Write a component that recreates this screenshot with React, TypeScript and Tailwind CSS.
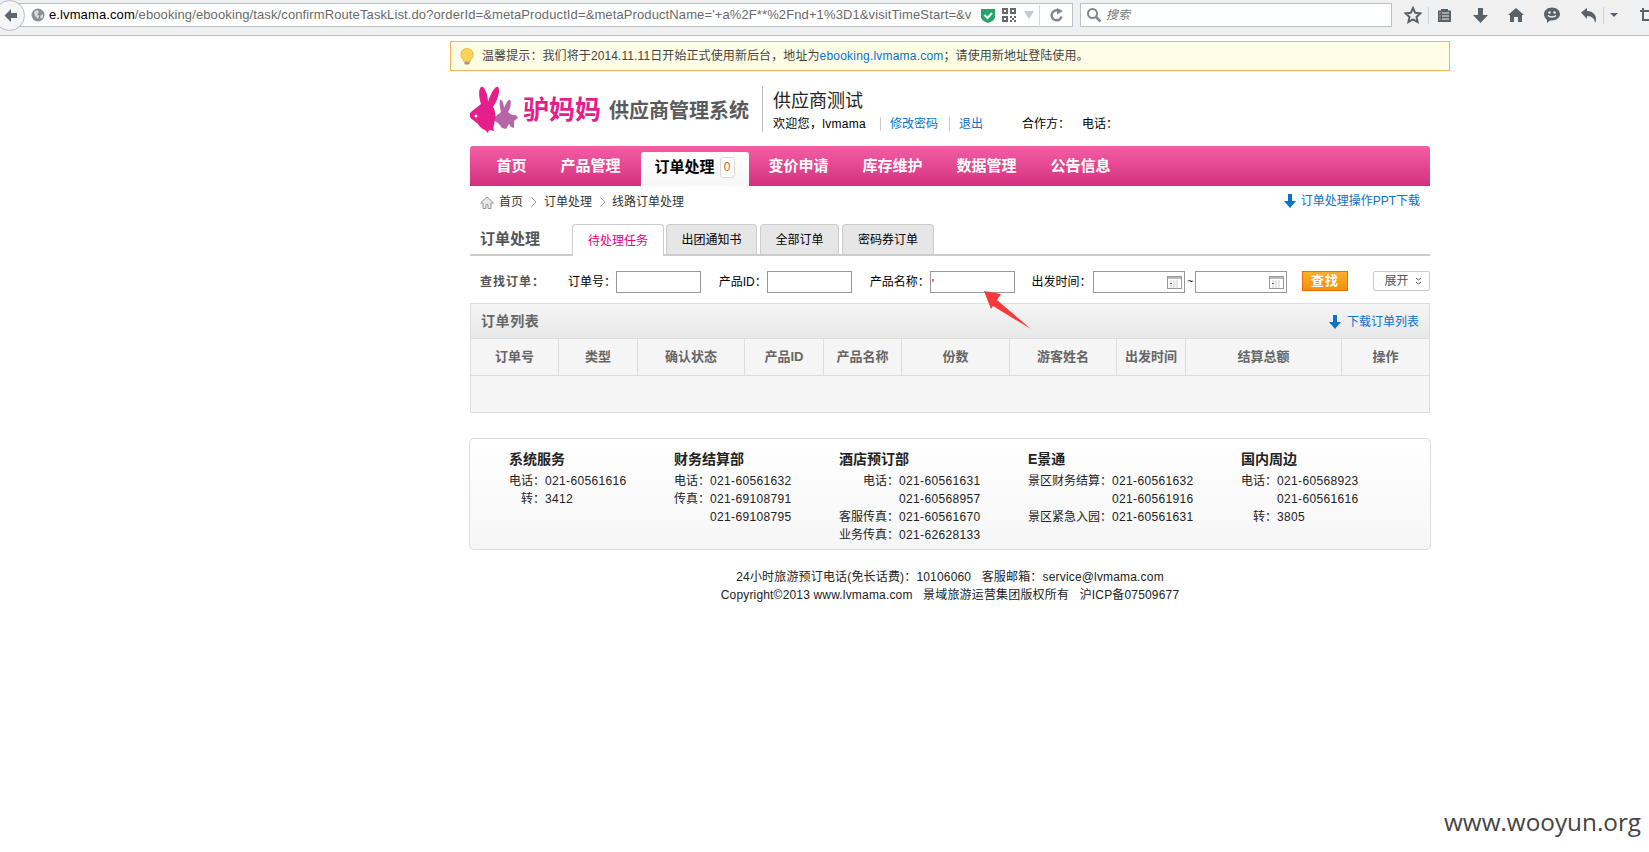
import React from 'react';

const font = "font-['Liberation_Sans','Noto_Sans_CJK_SC',sans-serif]";

const columns = [
  { name: '订单号', w: 'w-[88px]' },
  { name: '类型', w: 'w-[79px]' },
  { name: '确认状态', w: 'w-[107px]' },
  { name: '产品ID', w: 'w-[79px]' },
  { name: '产品名称', w: 'w-[78px]' },
  { name: '份数', w: 'w-[108px]' },
  { name: '游客姓名', w: 'w-[107px]' },
  { name: '出发时间', w: 'w-[69px]' },
  { name: '结算总额', w: 'w-[156px]' },
  { name: '操作', w: 'flex-1' },
];

const contacts = [
  {
    title: '系统服务',
    width: 'w-[165px]',
    label: 'w-[36px]',
    rows: [
      ['电话：', '021-60561616'],
      ['转：', '3412'],
    ],
  },
  {
    title: '财务结算部',
    width: 'w-[165px]',
    label: 'w-[36px]',
    rows: [
      ['电话：', '021-60561632'],
      ['传真：', '021-69108791'],
      ['', '021-69108795'],
    ],
  },
  {
    title: '酒店预订部',
    width: 'w-[189px]',
    label: 'w-[60px]',
    rows: [
      ['电话：', '021-60561631'],
      ['', '021-60568957'],
      ['客服传真：', '021-60561670'],
      ['业务传真：', '021-62628133'],
    ],
  },
  {
    title: 'E景通',
    width: 'w-[213px]',
    label: 'w-[84px]',
    rows: [
      ['景区财务结算：', '021-60561632'],
      ['', '021-60561916'],
      ['景区紧急入园：', '021-60561631'],
    ],
  },
  {
    title: '国内周边',
    width: 'w-[170px]',
    label: 'w-[36px]',
    rows: [
      ['电话：', '021-60568923'],
      ['', '021-60561616'],
      ['转：', '3805'],
    ],
  },
];

const DownArrow = () => (
  <svg width="12" height="14" viewBox="0 0 12 14" className="shrink-0">
    <path d="M4 0h4v7h4L6 14 0 7h4z" fill="#0a72c9" />
  </svg>
);

const Chevron = () => (
  <svg width="6" height="10" viewBox="0 0 6 10" className="shrink-0">
    <path d="M0.500 0.500L5 5 .5 9.500" fill="none" stroke="#999" />
  </svg>
);

const CalendarIcon = () => (
  <svg width="15" height="13" viewBox="0 0 15 13" className="shrink-0">
    <rect x="0.5" y="0.5" width="14" height="12" fill="#fff" stroke="#999" />
    <rect x="1" y="1" width="13" height="2" fill="#bbb" />
    <path d="M3 5h9M3 7h9M3 9h9M3 11h9" stroke="#ccc" strokeDasharray="2 1" />
    <rect x="3" y="7" width="2" height="1" fill="#d33" />
  </svg>
);

const Logo = () => (
  <svg width="52" height="48" viewBox="5 6 52 48" className="shrink-0">
    <path
      d="M37 19C39 18 41 23 41 27C43 23 45 18 47 19C49 21 47 28 45 31C47 33 50 35 53 34L55 37L51 40L51 47L48 46L46 43L43 48L39 47L36 43L32 40C30 38 31 36 33 35C35 33 37 32 38 31C37 27 36 22 37 19Z"
      fill="#b765a7"
      transform="translate(-2 1)"
    />
    <path
      d="M16 7C19 5 23 14 23 22C25 15 30 5 33 7C36 10 32 22 28 27C30 30 31 35 30 40C29 44 28 48 29 51L24 50L23 53L20 50C17 49 14 46 13 44L8 40C5 38 3 35 6 32C9 29 13 27 16 24C14 18 13 10 16 7Z"
      fill="#e61e8c"
    />
    <circle cx="11" cy="36" r="1.5" fill="#fff" />
  </svg>
);

const Toolbar = () => (
  <div className="flex items-center h-[35px] border-b border-[#bdbdbd] bg-[#f0f0f0] box-content">
    <div className="relative z-10 -ml-[6px] -mt-[4px] w-[31px] h-[31px] shrink-0 rounded-full border border-[#b5bcc4] bg-[#f5f5f5] flex items-center justify-end pr-[6px]">
      <svg width="15" height="15" viewBox="0 0 15 15">
        <path d="M8 1L1.5 7.5 8 14v-4h6V5H8z" fill="#5c6670" />
      </svg>
    </div>
    <div className="-ml-[10px] w-[1058px] h-[24px] shrink-0 -mt-[5px] border border-[#b8c0c8] bg-white flex items-center overflow-hidden">
      <svg width="14" height="14" viewBox="0 0 14 14" className="ml-[15px] shrink-0">
        <circle cx="7" cy="7" r="6.5" fill="#8a8f94" />
        <path d="M3 4l3-2 2 2-2 2 2 2-1 3-3-3zM9 8l3-2 0 3-2 2z" fill="#d9dcdf" />
      </svg>
      <div className="ml-[4px] w-[925px] shrink-0 overflow-hidden whitespace-nowrap text-[13px] tracking-[0.11px] text-[#6a6a6a]">
        <span className="text-black">e.lvmama.com</span>
        /ebooking/ebooking/task/confirmRouteTaskList.do?orderId=&metaProductId=&metaProductName='+a%2F**%2Fnd+1%3D1&visitTimeStart=&v
      </div>
      <svg width="14" height="15" viewBox="0 0 14 15" className="ml-[7px] shrink-0">
        <path d="M0 1h14v8c0 3-4 5-7 6-3-1-7-3-7-6z" fill="#2aa36b" />
        <path d="M3.5 7l3 3 4.500-5" fill="none" stroke="#fff" strokeWidth="2" />
      </svg>
      <svg width="14" height="14" viewBox="0 0 14 14" className="ml-[7px] shrink-0">
        <path d="M0 0h6v6H0zM8 0h6v6H8zM0 8h6v6H0zM8 8h2v2H8zM12 8h2v2h-2zM10 10h2v2h-2zM8 12h2v2H8zM12 12h2v2h-2z" fill="#666" />
        <path d="M2 2h2v2H2zM10 2h2v2h-2zM2 10h2v2H2z" fill="#fff" />
      </svg>
      <svg width="10" height="8" viewBox="0 0 10 8" className="ml-[8px] shrink-0">
        <path d="M0 0h10L5 8z" fill="#c3c9d0" />
      </svg>
      <div className="ml-[5px] w-px h-[20px] bg-[#d5d8db] shrink-0" />
      <svg width="14" height="14" viewBox="0 0 14 14" className="ml-[10px] shrink-0">
        <path d="M11.500 8.500A5 5 0 1 1 8 2.500" fill="none" stroke="#7d8791" strokeWidth="2.400" />
        <path d="M7 0l6 3-6 3.500z" fill="#7d8791" />
      </svg>
    </div>
    <div className="ml-[7px] w-[312px] h-[24px] shrink-0 -mt-[5px] border border-[#b8c0c8] bg-white flex items-center">
      <svg width="16" height="16" viewBox="0 0 16 16" className="ml-[5px]">
        <circle cx="6.500" cy="6.500" r="4.500" fill="none" stroke="#7f878f" strokeWidth="2" />
        <path d="M10 10l4.500 4.500" stroke="#7f878f" strokeWidth="2.500" />
      </svg>
      <span className="ml-[4px] text-[12px] italic text-[#777]">搜索</span>
    </div>
    <svg width="18" height="18" viewBox="0 0 18 18" className="ml-[12px] -mt-[5px] shrink-0">
      <path d="M9 2l2.200 4.800 5.200.6-3.900 3.500 1.100 5.100L9 13.400 4.400 16l1.100-5.100L1.600 7.400l5.200-.6z" fill="none" stroke="#59626b" strokeWidth="2" />
    </svg>
    <div className="ml-[6px] -mt-[5px] w-px h-[17px] bg-[#cfd2d5] shrink-0" />
    <svg width="15" height="15" viewBox="0 0 15 15" className="ml-[8px] -mt-[5px] shrink-0">
      <path d="M1 2.500h3V1h7v1.500h3V14H1z" fill="#59626b" />
      <path d="M5 5h7M5 8h7M5 11h7M2.500 5h1M2.500 8h1M2.500 11h1" stroke="#f0f0f0" />
    </svg>
    <svg width="15" height="15" viewBox="0 0 15 15" className="ml-[21px] -mt-[5px] shrink-0">
      <path d="M5 0h5v7h5l-7.500 8L0 7h5z" fill="#59626b" />
    </svg>
    <svg width="16" height="16" viewBox="0 0 16 16" className="ml-[20px] -mt-[5px] shrink-0">
      <path d="M8 1l8 7h-2v7h-4v-5H6v5H2V8H0z" fill="#59626b" />
    </svg>
    <svg width="16" height="16" viewBox="0 0 16 16" className="ml-[20px] -mt-[5px] shrink-0">
      <path d="M8 0.500c4.400 0 8 2.900 8 6.500s-3.600 6.500-8 6.500H6L3 16v-3.300C1.200 11.500 0 9.400 0 7 0 3.400 3.600.5 8 .5z" fill="#59626b" />
      <circle cx="5.500" cy="5.500" r="1.200" fill="#f0f0f0" />
      <circle cx="10.500" cy="5.500" r="1.200" fill="#f0f0f0" />
      <path d="M4 8.500c2 2 6 2 8 0" fill="none" stroke="#f0f0f0" strokeWidth="1.300" />
    </svg>
    <svg width="15" height="15" viewBox="0 0 15 15" className="ml-[21px] -mt-[5px] shrink-0">
      <path d="M0 4.500L6 0v3c5 0 9 3 9 8 0 1.500-.3 3-1 4 0-4-3-7-8-7v3z" fill="#59626b" />
    </svg>
    <div className="ml-[7px] -mt-[5px] w-px h-[17px] bg-[#cfd2d5] shrink-0" />
    <svg width="8" height="4" viewBox="0 0 8 4" className="ml-[6px] -mt-[5px] shrink-0">
      <path d="M0 0h8L4 4z" fill="#59626b" />
    </svg>
    <svg width="15" height="15" viewBox="0 0 15 15" className="ml-[22px] -mt-[5px] shrink-0">
      <path d="M3 0v12h12M0 3h12v12" fill="none" stroke="#59626b" strokeWidth="2" />
    </svg>
  </div>
);

const App = () => {
  return (
    <div className={`relative min-h-[852px] w-[1649px] overflow-hidden bg-white text-[12px] leading-[18px] text-black ${font}`}>
      <Toolbar />

      <div className="ml-[450px] w-[1000px] mt-[5px]">
        <div className="h-[30px] border border-[#f5b455] bg-[#fffde5] flex items-center pl-[9px] text-[12px] tracking-[0.1px] text-[#444]">
          <svg width="14" height="17" viewBox="0 0 16 19" className="shrink-0">
            <path d="M8 0.500a7 7 0 0 1 4 12.800V15H4v-1.700A7 7 0 0 1 8 .5z" fill="#fbd35a" stroke="#e8b13a" />
            <rect x="5" y="15.500" width="6" height="3" rx="1" fill="#9a9a9a" />
          </svg>
          <span className="ml-[8px]">
            温馨提示：我们将于2014.11.11日开始正式使用新后台，地址为
            <span className="text-[#0a72c9] tracking-[0.2px]">ebooking.lvmama.com</span>
            ；请使用新地址登陆使用。
          </span>
        </div>
      </div>

      <div className="ml-[470px] w-[960px]">
        {/* logo + supplier info */}
        <div className="h-[75px] pt-[15px] flex items-start">
          <Logo />
          <div className="ml-[1px] mt-[7px] text-[26px] leading-[34px] font-bold text-[#e61e8c] whitespace-nowrap">驴妈妈</div>
          <div className="ml-[8px] mt-[11px] text-[20px] leading-[28px] font-bold text-[#5a5a5a] whitespace-nowrap">供应商管理系统</div>
          <div className="ml-[13px] h-[46px] w-px bg-[#bbb] shrink-0" />
          <div className="ml-[10px]">
            <div className="mt-[3px] text-[18px] leading-[24px] text-[#222] whitespace-nowrap">供应商测试</div>
            <div className="mt-[2px] flex items-center whitespace-nowrap">
              <span className="w-[95px] tracking-[0.3px]">欢迎您，lvmama</span>
              <span className="ml-[12px] w-px h-[14px] bg-[#ccc]" />
              <span className="ml-[9px] text-[#0a72c9]">修改密码</span>
              <span className="ml-[11px] w-px h-[14px] bg-[#ccc]" />
              <span className="ml-[9px] text-[#0a72c9]">退出</span>
              <span className="ml-[39px]">合作方：</span>
              <span className="ml-[12px]">电话：</span>
            </div>
          </div>
        </div>

        {/* main nav */}
        <div className="h-[40px] rounded-t-[3px] bg-gradient-to-b from-[#f25ea3] to-[#d42f80] flex items-end pl-[26.5px] gap-[34px] text-[15px] leading-[40px] font-bold text-white whitespace-nowrap">
          <span>首页</span>
          <span>产品管理</span>
          <div className="-mx-[14px] h-[34px] w-[108px] pl-[14px] pb-[4px] rounded-t-[3px] bg-gradient-to-b from-white to-[#f7f7f7] text-black flex items-center">
            <span>订单处理</span>
            <span className="ml-[5px] w-[15px] h-[21px] rounded-[3px] border border-[#d8d8d8] bg-white text-[12px] leading-[19px] font-normal text-center text-[#e2571e]">0</span>
          </div>
          <span>变价申请</span>
          <span>库存维护</span>
          <span>数据管理</span>
          <span>公告信息</span>
        </div>

        {/* breadcrumb */}
        <div className="h-[38px] pb-[6px] flex items-center pl-[10px] pr-[10px] text-[#333] whitespace-nowrap">
          <svg width="14" height="13" viewBox="0 0 14 13" className="shrink-0">
            <path d="M7 1L.5 7H3v5.500h3v-4h2v4h3V7h2.500z" fill="#e8e8e8" stroke="#999" />
          </svg>
          <span className="ml-[5px]">首页</span>
          <span className="ml-[8px]"><Chevron /></span>
          <span className="ml-[7px]">订单处理</span>
          <span className="ml-[8px]"><Chevron /></span>
          <span className="ml-[6px]">线路订单处理</span>
          <div className="ml-auto -mt-[2px] flex items-center text-[#0a72c9]">
            <DownArrow />
            <span className="ml-[5px]">订单处理操作PPT下载</span>
          </div>
        </div>

        {/* tabs */}
        <div className="relative h-[32px] border-b-2 border-[#ccc] flex items-end pl-[10px]">
          <div className="w-[92px] self-center text-[15px] font-bold text-[#555] whitespace-nowrap">订单处理</div>
          <div className="relative z-10 -mb-[2px] w-[92px] h-[32px] border border-b-0 border-[#ccc] rounded-t-[4px] bg-white text-[#e5007f] text-center leading-[32px]">待处理任务</div>
          <div className="ml-[2px] w-[91px] h-[30px] border border-b-0 border-[#ccc] rounded-t-[4px] bg-[#e6e6e6] text-center leading-[30px]">出团通知书</div>
          <div className="ml-[3px] w-[79px] h-[30px] border border-b-0 border-[#ccc] rounded-t-[4px] bg-[#e6e6e6] text-center leading-[30px]">全部订单</div>
          <div className="ml-[3px] w-[92px] h-[30px] border border-b-0 border-[#ccc] rounded-t-[4px] bg-[#e6e6e6] text-center leading-[30px]">密码券订单</div>
        </div>

        {/* search row */}
        <div className="mt-[15px] h-[22px] flex items-center pl-[10px] whitespace-nowrap">
          <span className="w-[88px] font-bold tracking-[1px] text-[#555]">查找订单：</span>
          <span className="w-[48px]">订单号：</span>
          <div className="w-[85px] h-[22px] border border-[#999] bg-white" />
          <span className="ml-[18px] w-[48px]">产品ID：</span>
          <div className="w-[85px] h-[22px] border border-[#999] bg-white" />
          <span className="ml-[18px] w-[60px]">产品名称：</span>
          <div className="w-[85px] h-[22px] border border-[#999] bg-white pl-[1px] pt-[2px] leading-[20px] text-[#603]">'</div>
          <span className="ml-[17px] w-[62px]">出发时间：</span>
          <div className="w-[92px] h-[22px] border border-[#999] bg-white flex items-center justify-end pr-[2px]">
            <CalendarIcon />
          </div>
          <span className="w-[10px] text-center text-[10px]">~</span>
          <div className="w-[92px] h-[22px] border border-[#999] bg-white flex items-center justify-end pr-[2px]">
            <CalendarIcon />
          </div>
          <button className="ml-[15px] w-[46px] h-[20px] -mt-[2px] border border-[#ea6c0a] bg-gradient-to-b from-[#fbae2a] to-[#f19209] text-white font-bold text-[13px] leading-[18px] tracking-[1px]">查找</button>
          <button className="ml-[25px] w-[57px] h-[20px] -mt-[2px] border border-[#ccc] rounded-[2px] bg-white pl-[3px] text-[#555] flex items-center justify-center">
            展开
            <svg width="7" height="8" viewBox="0 0 7 8" className="ml-[6px]">
              <path d="M1 1l2.500 2L6 1M1 5l2.500 2L6 5" fill="none" stroke="#555" />
            </svg>
          </button>
        </div>

        {/* order list */}
        <div className="mt-[10px] border border-[#ddd] bg-[#f5f5f5]">
          <div className="h-[35px] bg-gradient-to-b from-[#f5f5f5] to-[#e8e8e8] border-b border-[#ddd] flex items-center pl-[10px] pr-[10px]">
            <span className="text-[14px] tracking-[0.6px] font-bold text-[#666]">订单列表</span>
            <div className="ml-auto mt-[1px] flex items-center text-[#0a72c9]">
              <DownArrow />
              <span className="ml-[6px]">下载订单列表</span>
            </div>
          </div>
          <div className="h-[37px] border-b border-[#ddd] flex">
            {columns.map((col, i) => (
              <div
                key={col.name}
                className={`${col.w} ${i < columns.length - 1 ? 'border-r border-[#ddd]' : ''} flex items-center justify-center text-[13px] font-bold text-[#666]`}
              >
                {col.name}
              </div>
            ))}
          </div>
          <div className="h-[36px]" />
        </div>

        {/* contacts */}
        <div className="-mx-px mt-[25px] h-[112px] border border-[#ddd] rounded-[5px] bg-gradient-to-b from-white to-[#f6f6f6] pt-[11px] pl-[39px] flex">
          {contacts.map((c) => (
            <div key={c.title} className={`${c.width} shrink-0`}>
              <div className="font-bold text-[14px] text-[#222] mb-[4px] whitespace-nowrap">{c.title}</div>
              {c.rows.map((row) => (
                <div key={row[1]} className="flex whitespace-nowrap text-[#222]">
                  <span className={`${c.label} text-right shrink-0`}>{row[0]}</span>
                  <span className="tracking-[0.35px]">{row[1]}</span>
                </div>
              ))}
            </div>
          ))}
        </div>

        <div className="mt-[18px] text-center text-[#222] whitespace-pre tracking-[0.17px]">
          <div>24小时旅游预订电话(免长话费)：10106060   客服邮箱：service@lvmama.com</div>
          <div>Copyright©2013 www.lvmama.com   景域旅游运营集团版权所有   沪ICP备07509677</div>
        </div>
      </div>

      {/* red annotation arrow */}
      <svg width="52" height="42" viewBox="980 289 52 42" className="absolute left-[980px] top-[289px]">
        <polygon points="984,291 1001,294 997,300 1031,329 993,306 991,309" fill="#f8393a" />
      </svg>

      <div className="absolute left-[1444px] top-[805px] text-[24.3px] leading-[34px] text-[#444] font-['Open_Sans',sans-serif]">www.wooyun.org</div>
    </div>
  );
};

export default App;
